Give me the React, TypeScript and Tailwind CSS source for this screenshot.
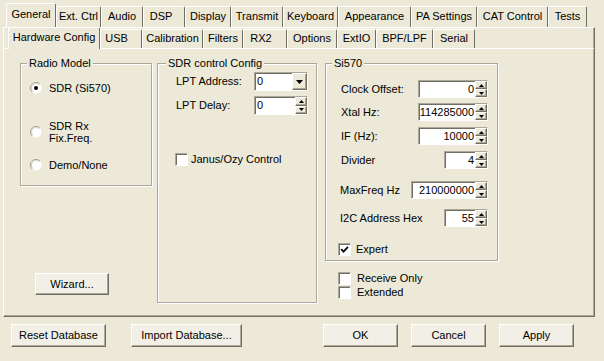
import React from "react";

const sunken =
  "border border-t-[#ACA899] border-l-[#ACA899] border-r-white border-b-white shadow-[inset_1px_1px_0_#716F64]";
const raised =
  "border border-t-white border-l-white border-r-[#716F64] border-b-[#716F64] shadow-[inset_-1px_-1px_0_#ACA899]";

const topTabs = [
  { label: "General", cls: "w-[50px]", sel: true },
  { label: "Ext. Ctrl", cls: "w-[45px]" },
  { label: "Audio", cls: "w-[42px]" },
  { label: "DSP", cls: "w-[42px] pr-[6px]" },
  { label: "Display", cls: "w-[46px]" },
  { label: "Transmit", cls: "w-[52px]" },
  { label: "Keyboard", cls: "w-[55px]" },
  { label: "Appearance", cls: "w-[73px]" },
  { label: "PA Settings", cls: "w-[66px]" },
  { label: "CAT Control", cls: "w-[71px]" },
  { label: "Tests", cls: "w-[39px]" },
];

const subTabs = [
  { label: "Hardware Config", cls: "w-[92px]", sel: true },
  { label: "USB", cls: "w-[42px] pr-[9px]" },
  { label: "Calibration", cls: "w-[61px]" },
  { label: "Filters", cls: "w-[40px]" },
  { label: "RX2", cls: "w-[44px] pr-[8px]" },
  { label: "Options", cls: "w-[50px]" },
  { label: "ExtIO", cls: "w-[39px]" },
  { label: "BPF/LPF", cls: "w-[57px]" },
  { label: "Serial", cls: "w-[42px]" },
];

function Tab({ label, cls, sel, sub }: { label: string; cls: string; sel?: boolean; sub?: boolean }) {
  const base =
    "shrink-0 whitespace-nowrap text-center rounded-t-[2px] border-t border-l border-r border-t-white border-l-white border-r-[#716F64] bg-[#ECE9D8]";
  let size = "";
  if (sub) size = sel ? "relative z-10 -mb-[1px] h-[22px] pt-[3px]" : "h-[19px] pt-[2px]";
  else size = sel ? "relative z-10 -mb-[1px] h-[25px] pt-[4px]" : "h-[21px] pt-[3px]";
  return <div className={`${base} ${size} ${cls}`}>{label}</div>;
}

function Group({
  label,
  labelPos,
  className,
  children,
}: {
  label: string;
  labelPos: string;
  className: string;
  children: React.ReactNode;
}) {
  return (
    <div
      className={`relative flex flex-col border border-[#ACA899] shadow-[inset_1px_1px_0_#fff,1px_1px_0_#fff] ${className}`}
    >
      <span className={`absolute top-[-7px] bg-[#ECE9D8] px-[2px] whitespace-nowrap ${labelPos}`}>{label}</span>
      {children}
    </div>
  );
}

function Radio({ checked }: { checked?: boolean }) {
  return (
    <svg width="12" height="12" viewBox="0 0 12 12" className="shrink-0">
      <circle cx="6" cy="6" r="5.5" fill="#fff" />
      <path d="M2.1 9.9A5.5 5.5 0 0 1 9.9 2.1" fill="none" stroke="#A09D90" />
      <path d="M2.8 9.2A4.5 4.5 0 0 1 9.2 2.8" fill="none" stroke="#D6D3C6" />
      {checked && <circle cx="6" cy="6" r="2" fill="#000" />}
    </svg>
  );
}

function Check({ checked }: { checked?: boolean }) {
  return (
    <div className={`flex h-[13px] w-[13px] shrink-0 items-center justify-center bg-white ${sunken}`}>
      {checked && (
        <svg width="9" height="9" viewBox="0 0 9 9">
          <path d="M1.2 4.2l2.3 2.4L8 1.8" fill="none" stroke="#000" strokeWidth="1.8" />
        </svg>
      )}
    </div>
  );
}

function SpinButtons() {
  return (
    <div className="flex w-[12px] shrink-0 flex-col">
      <div className={`flex flex-1 items-center justify-center bg-[#ECE9D8] ${raised}`}>
        <svg width="5" height="3" viewBox="0 0 5 3">
          <path d="M2.5 0L5 3H0z" fill="#000" />
        </svg>
      </div>
      <div className={`flex flex-1 items-center justify-center bg-[#ECE9D8] ${raised}`}>
        <svg width="5" height="3" viewBox="0 0 5 3">
          <path d="M0 0h5L2.5 3z" fill="#000" />
        </svg>
      </div>
    </div>
  );
}

function Spin({ value, className, left }: { value: string; className: string; left?: boolean }) {
  return (
    <div className={`flex h-[18px] shrink-0 bg-white ${sunken} ${className}`}>
      <div
        className={`flex-1 overflow-hidden whitespace-nowrap pt-[2px] ${left ? "pl-[2px] text-left" : "pr-[1px] text-right"}`}
      >
        {value}
      </div>
      <SpinButtons />
    </div>
  );
}

function Button({ children, className }: { children: React.ReactNode; className: string }) {
  return (
    <button type="button" className={`flex shrink-0 items-center justify-center bg-[#F1EFE6] ${raised} ${className}`}>
      {children}
    </button>
  );
}

export default function App() {
  return (
    <div className="h-[361px] w-[604px] overflow-hidden bg-[#ECE9D8] text-[11px] leading-[13px] text-black [font-family:'Liberation_Sans',Arial,sans-serif]">
      <div className="flex h-[27px] items-end pl-[6px]">
        {topTabs.map((t) => (
          <Tab key={t.label} {...t} />
        ))}
      </div>

      <div
        className={`ml-[3px] flex h-[290px] w-[592px] flex-col border border-t-white border-l-white border-r-[#716F64] border-b-[#716F64] shadow-[inset_-1px_-1px_0_#ACA899]`}
      >
        <div className="flex h-[20px] shrink-0 items-end pl-[4px]">
          {subTabs.map((t) => (
            <Tab key={t.label} {...t} sub />
          ))}
        </div>

        <div className="flex flex-1 items-start border-t border-white pt-[14px]">
          {/* left column */}
          <div className="ml-[16px] flex w-[132px] flex-col">
            <Group label="Radio Model" labelPos="left-[6px]" className="h-[123px]">
              <div className="mt-[16px] flex h-[16px] items-center pl-[9px]">
                <Radio checked />
                <span className="ml-[7px]">SDR (Si570)</span>
              </div>
              <div className="mt-[24px] flex h-[24px] items-center pl-[9px]">
                <Radio />
                <span className="ml-[7px] leading-[12px]">
                  SDR Rx
                  <br />
                  Fix.Freq.
                </span>
              </div>
              <div className="mt-[13px] flex h-[16px] items-center pl-[9px]">
                <Radio />
                <span className="ml-[7px]">Demo/None</span>
              </div>
            </Group>
            <Button className="ml-[15px] mt-[87px] h-[22px] w-[74px]">Wizard...</Button>
          </div>

          {/* middle column */}
          <Group label="SDR control Config" labelPos="left-[8px]" className="ml-[5px] h-[240px] w-[160px]">
            <div className="mt-[8px] flex h-[19px] items-center pl-[18px]">
              <span className="w-[78px]">LPT Address:</span>
              <div className={`flex h-[19px] w-[54px] bg-white ${sunken}`}>
                <div className="flex-1 pl-[2px] pt-[2px]">0</div>
                <div className={`flex w-[15px] items-center justify-center bg-[#ECE9D8] ${raised}`}>
                  <svg width="7" height="4" viewBox="0 0 7 4">
                    <path d="M0 0h7L3.5 4z" fill="#000" />
                  </svg>
                </div>
              </div>
            </div>
            <div className="mt-[5px] flex h-[19px] items-center pl-[18px]">
              <span className="w-[78px]">LPT Delay:</span>
              <Spin value="0" left className="h-[19px] w-[54px]" />
            </div>
            <div className="mt-[38px] flex h-[13px] items-center pl-[17px]">
              <Check />
              <span className="ml-[3px]">Janus/Ozy Control</span>
            </div>
          </Group>

          {/* right column */}
          <div className="ml-[8px] flex w-[173px] flex-col">
            <Group label="Si570" labelPos="left-[6px]" className="h-[198px]">
              <div className="mt-[16px] flex h-[18px] items-center justify-between pl-[15px] pr-[9px]">
                <span>Clock Offset:</span>
                <Spin value="0" className="w-[70px]" />
              </div>
              <div className="mt-[5px] flex h-[18px] items-center justify-between pl-[15px] pr-[9px]">
                <span>Xtal Hz:</span>
                <Spin value="114285000" className="w-[70px]" />
              </div>
              <div className="mt-[6px] flex h-[18px] items-center justify-between pl-[15px] pr-[9px]">
                <span>IF (Hz):</span>
                <Spin value="10000" className="w-[70px]" />
              </div>
              <div className="mt-[6px] flex h-[18px] items-center justify-between pl-[15px] pr-[9px]">
                <span>Divider</span>
                <Spin value="4" className="w-[44px]" />
              </div>
              <div className="mt-[12px] flex h-[18px] items-center justify-between pl-[14px] pr-[9px]">
                <span>MaxFreq Hz</span>
                <Spin value="210000000" className="w-[77px]" />
              </div>
              <div className="mt-[10px] flex h-[18px] items-center justify-between pl-[14px] pr-[9px]">
                <span>I2C Address Hex</span>
                <Spin value="55" className="w-[44px]" />
              </div>
              <div className="mt-[16px] flex h-[13px] items-center pl-[12px]">
                <Check checked />
                <span className="ml-[5px]">Expert</span>
              </div>
            </Group>
            <div className="ml-[13px] mt-[11px] flex flex-col">
              <div className="flex h-[13px] items-center">
                <Check />
                <span className="ml-[6px]">Receive Only</span>
              </div>
              <div className="mt-[1px] flex h-[13px] items-center">
                <Check />
                <span className="ml-[6px]">Extended</span>
              </div>
            </div>
          </div>
        </div>
      </div>

      <div className="mt-[7px] flex pl-[11px]">
        <Button className="h-[23px] w-[95px]">Reset Database</Button>
        <Button className="ml-[25px] h-[23px] w-[111px]">Import Database...</Button>
        <Button className="ml-[81px] h-[23px] w-[75px]">OK</Button>
        <Button className="ml-[13px] h-[23px] w-[75px]">Cancel</Button>
        <Button className="ml-[13px] h-[23px] w-[75px]">Apply</Button>
      </div>
    </div>
  );
}
